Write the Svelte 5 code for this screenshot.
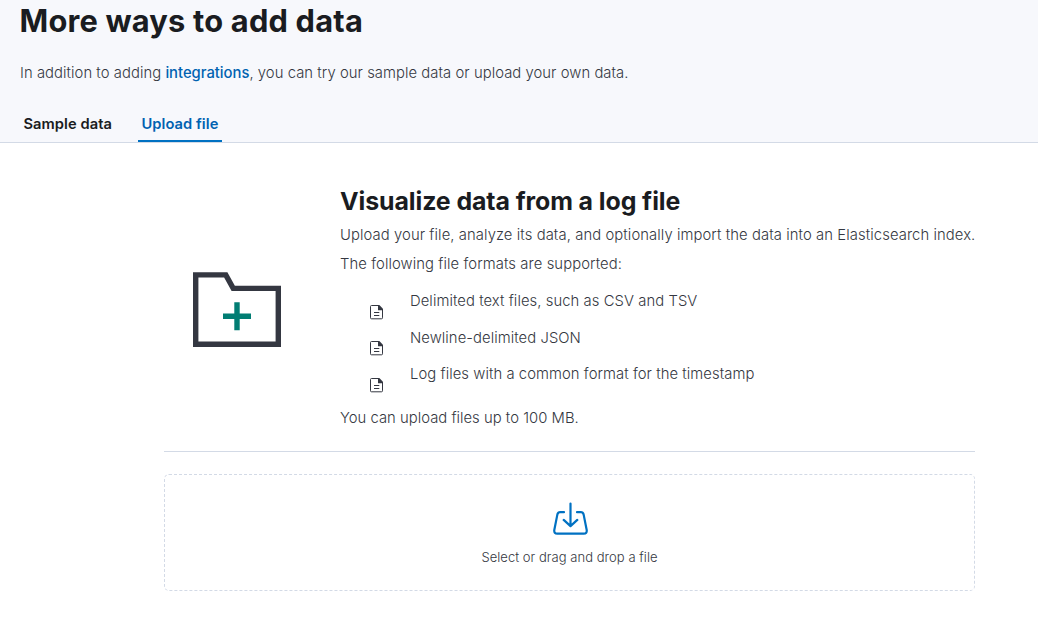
<script>
  const formats = [
    'Delimited text files, such as CSV and TSV',
    'Newline-delimited JSON',
    'Log files with a common format for the timestamp'
  ];
</script>

<div class="page">
  <header>
    <h1>More ways to add data</h1>
    <p class="lead">In addition to adding <a href="#integrations">integrations</a>, you can try our sample data or upload your own data.</p>
    <nav>
      <button class="tab">Sample data</button>
      <button class="tab active">Upload file</button>
    </nav>
  </header>
  <main>
    <section class="about">
      <svg class="folder" width="90" height="76" viewBox="0 0 90 76" fill="none">
        <path d="M3.7 2.9H33.8L41.2 16.4H86.3V72.3H3.7Z" stroke="#343741" stroke-width="5.4" />
        <path d="M45 30.2V58.2M31 44.2H59" stroke="#017d73" stroke-width="5.4" />
      </svg>
      <div class="copy">
        <h2>Visualize data from a log file</h2>
        <p>Upload your file, analyze its data, and optionally import the data into an Elasticsearch index.</p>
        <p>The following file formats are supported:</p>
        <ul>
          {#each formats as format}
            <li>
              <svg width="14" height="15" viewBox="0 0 14 15">
                <path d="M8.5 .5H1.5Q.5 .5 .5 1.5V12.8Q.5 13.8 1.5 13.8H11.5Q12.5 13.8 12.5 12.8V4.5Z" fill="none" stroke="#343741" />
                <path d="M8 0H9.3L13 3.7V5.2H8Z" fill="#343741" />
                <path d="M4 7.5H9.3M4 10.5H9.3" stroke="#343741" />
              </svg>
              <span>{format}</span>
            </li>
          {/each}
        </ul>
        <p class="limit">You can upload files up to 100 MB.</p>
      </div>
    </section>
    <hr />
    <button class="drop">
      <svg width="36" height="34" viewBox="0 0 36 34" fill="none" stroke="#0071c2" stroke-width="2.2" stroke-linecap="round" stroke-linejoin="round">
        <path d="M12 10.2H8.2Q6 10.2 5.4 12.4L2.3 28Q1.8 31.6 5.3 31.6H31.7Q35.2 31.6 34.7 28L31.6 12.4Q31 10.2 28.8 10.2H25" />
        <path d="M18.5 1.5V23.8M11.7 17.9L18.5 24.1L25.3 17.9" />
      </svg>
      <span>Select or drag and drop a file</span>
    </button>
  </main>
</div>

<style>
  :global(body) { margin: 0; background: #fff; }
  .page {
    height: 622px;
    overflow: hidden;
    font-family: Inter, sans-serif;
    font-size: 14.8px;
    letter-spacing: 0.09px;
    font-weight: 300;
    line-height: 22px;
    color: #343741;
  }
  header {
    box-sizing: border-box;
    height: 143px;
    padding: 3px 20px 0;
    background: #f7f8fc;
    border-bottom: 1px solid #d3dae6;
  }
  h1, h2, p, ul { margin: 0; padding: 0; }
  h1 { margin-left: -0.5px; font-size: 30.8px; letter-spacing: 0.2px; line-height: 36px; font-weight: 700; color: #1a1c21; }
  .lead { margin-top: 23px; letter-spacing: 0.06px; }
  a { color: #0062b1; font-weight: 500; text-decoration: none; letter-spacing: 0; }
  nav { display: flex; gap: 22px; margin-top: 22px; }
  button { font-family: inherit; background: none; cursor: pointer; }
  .tab {
    box-sizing: border-box;
    height: 36px;
    padding: 1px 4px 0 3.5px;
    border: 0;
    border-bottom: 2px solid transparent;
    font-size: 14.7px;
    letter-spacing: 0.05px;
    line-height: 34px;
    font-weight: 600;
    color: #1a1c21;
  }
  .active { color: #0062b1; border-bottom-color: #0071c2; }
  main { width: 811px; margin-left: 164px; padding-top: 40px; }
  .about { display: flex; align-items: center; height: 250px; }
  .folder { flex: none; margin: 3px 0 0 28px; }
  .copy { flex: 1; margin-left: 58px; align-self: flex-start; white-space: nowrap; }
  h2 { font-size: 24.9px; letter-spacing: -0.08px; line-height: 36px; font-weight: 700; color: #1a1c21; }
  .copy p { margin-top: 7px; }
  .copy h2 + p { margin-top: 5px; }
  .copy .limit { margin-top: 11px; letter-spacing: 0.03px; }
  ul { list-style: none; margin-top: 11px; letter-spacing: 0.07px; }
  li { display: flex; height: 36.5px; padding-left: 30px; }
  li svg { flex: none; margin-top: 18.7px; }
  li span { margin-left: 26px; line-height: 30px; }
  hr { height: 1px; margin: 18px 0 22px; border: 0; background: #d3dae6; }
  .drop {
    box-sizing: border-box;
    display: flex;
    flex-direction: column;
    align-items: center;
    width: 811px;
    height: 117px;
    padding: 27px 0 0;
    border: 1px dashed #d3dae6;
    border-radius: 5px;
    font-size: 13px;
    line-height: 20px;
    letter-spacing: 0.04px;
    font-weight: 300;
    color: #343741;
  }
  .drop span { margin-top: 11px; }
</style>
